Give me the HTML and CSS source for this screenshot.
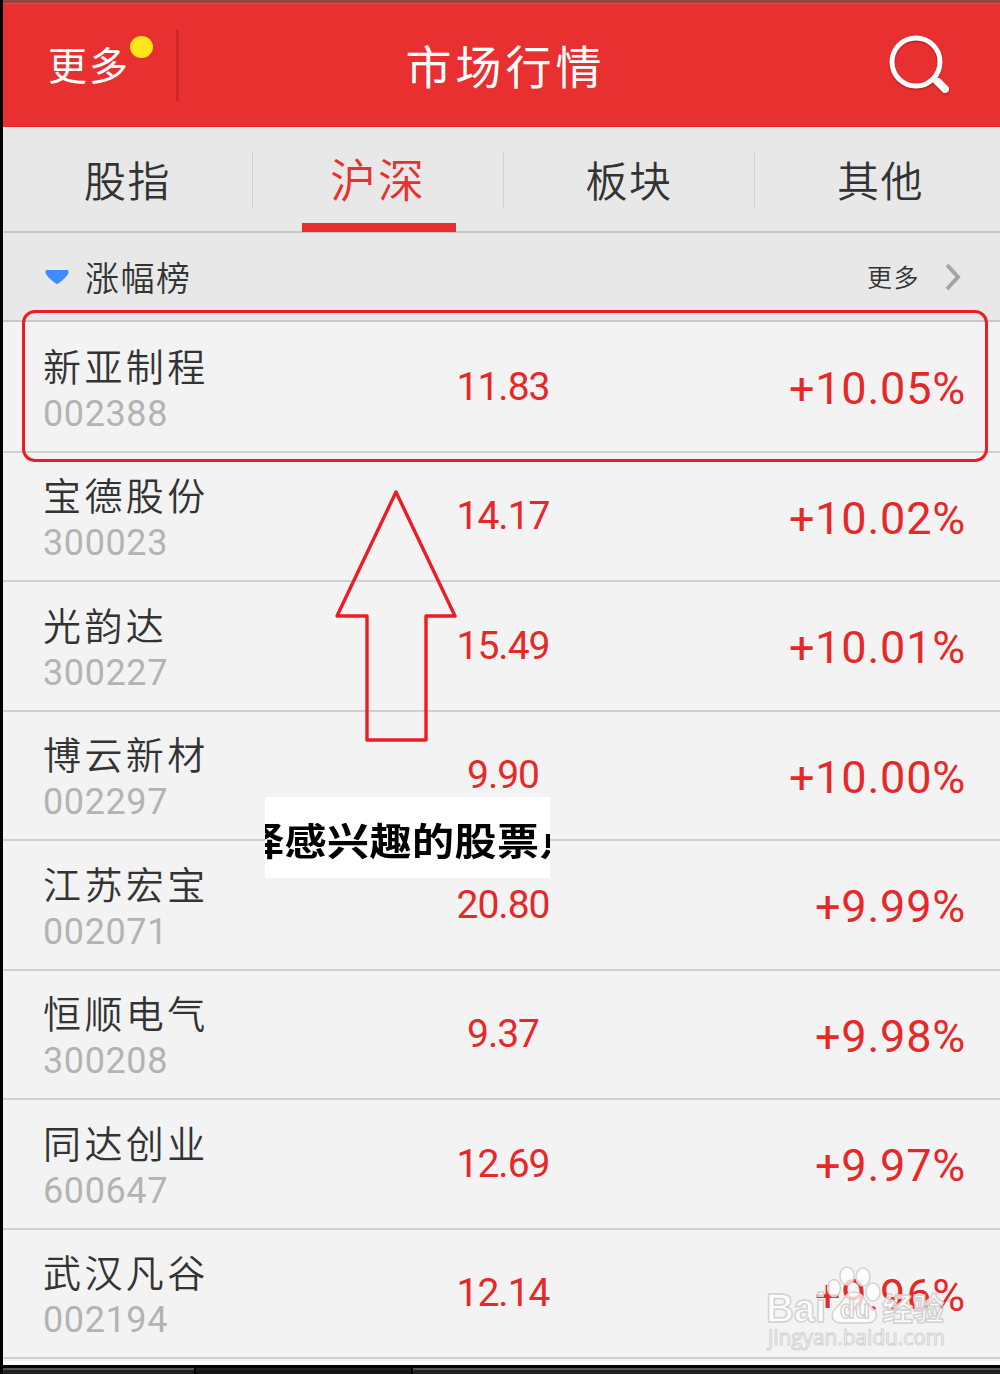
FILE: index.html
```html
<!doctype html>
<html lang="zh-CN">
<head>
	<title>市场行情</title>
	<meta charset="utf-8" />
	<link rel="stylesheet" href="styles.css">
</head>
	<body>
		<div class="screen">
			<header class="header">
				<a class="menu">更多<i class="dot"></i></a>
				<h1>市场行情</h1>
				<svg class="search" width="64" height="62" viewBox="0 0 64 62">
					<circle cx="30" cy="28" r="24" fill="none" stroke="#fff" stroke-width="5"/>
					<path d="M46 43L52 49" stroke="#fff" stroke-width="6"/>
					<path d="M52 48L59 55" stroke="#fff" stroke-width="8" stroke-linecap="round"/>
				</svg>
			</header>
			<nav class="tabs">
				<a class="tab">股指</a>
				<a class="tab active">沪深</a>
				<a class="tab">板块</a>
				<a class="tab">其他</a>
			</nav>
			<div class="section">
				<svg class="caret" width="24" height="16" viewBox="0 0 24 16"><path d="M2 1H22Q24 1 23.5 4Q22 8 14 14Q12 16 10 14Q2 8 .5 4Q0 1 2 1Z" fill="#3f8cff"/></svg>
				<span class="section-name">涨幅榜</span>
				<span class="section-more">更多</span>
				<svg class="chevron" width="18" height="28" viewBox="0 0 18 28"><path d="M3 2L14 14L3 26" fill="none" stroke="#a5a5a5" stroke-width="4"/></svg>
			</div>
			<ul class="stocks">
				<li><div><p class="name">新亚制程</p><p class="code">002388</p></div><span class="price">11.83</span><span class="change">+10.05%</span></li>
				<li><div><p class="name">宝德股份</p><p class="code">300023</p></div><span class="price">14.17</span><span class="change">+10.02%</span></li>
				<li><div><p class="name">光韵达</p><p class="code">300227</p></div><span class="price">15.49</span><span class="change">+10.01%</span></li>
				<li><div><p class="name">博云新材</p><p class="code">002297</p></div><span class="price">9.90</span><span class="change">+10.00%</span></li>
				<li><div><p class="name">江苏宏宝</p><p class="code">002071</p></div><span class="price">20.80</span><span class="change">+9.99%</span></li>
				<li><div><p class="name">恒顺电气</p><p class="code">300208</p></div><span class="price">9.37</span><span class="change">+9.98%</span></li>
				<li><div><p class="name">同达创业</p><p class="code">600647</p></div><span class="price">12.69</span><span class="change">+9.97%</span></li>
				<li><div><p class="name">武汉凡谷</p><p class="code">002194</p></div><span class="price">12.14</span><span class="change">+9.96%</span></li>
			</ul>
			<footer class="bottom"><i></i><i class="current"></i><i></i></footer>
		</div>

		<!-- annotations over the list -->
		<div class="highlight"></div>
		<svg class="arrow" width="124" height="254" viewBox="0 0 124 254">
			<path d="M62 4L121 128H92V252H33V128H3Z" fill="none" stroke="#ed1c24" stroke-width="3.4" stroke-linejoin="round"/>
		</svg>
		<div class="note"><p>择感兴趣的股票点</p></div>
		<svg class="watermark" width="190" height="94" viewBox="0 0 190 94">
			<g fill="#fff" fill-opacity=".75" stroke="#d2d2d2" stroke-width="1.5">
				<text class="brand" x="4" y="62" textLength="60" lengthAdjust="spacingAndGlyphs">Bai</text>
				<ellipse cx="72" cy="28" rx="6.5" ry="8.5"/>
				<ellipse cx="85" cy="16" rx="7" ry="9"/>
				<ellipse cx="101" cy="17" rx="7" ry="9"/>
				<ellipse cx="111" cy="32" rx="7" ry="9"/>
				<path d="M92 32C83 32 82 41 76 46C67 53 69 63 79 63H105C115 63 118 53 109 47C103 42 101 32 92 32Z"/>
				<text class="du" x="78" y="58" textLength="30" lengthAdjust="spacingAndGlyphs">du</text>
				<text class="jingyan" x="120" y="60">经验</text>
				<text class="site" x="6" y="85" textLength="177" lengthAdjust="spacingAndGlyphs">jingyan.baidu.com</text>
			</g>
		</svg>
	</body>
</html>
```

FILE: styles.css
```css
* {
	box-sizing: border-box;
}

body {
	margin: 0;
	width: 1000px;
	height: 1374px;
	position: relative;
	overflow: hidden;
	font-family: Roboto, "Noto Sans CJK SC", sans-serif;
	color: #333;
	background-color: #f3f3f3;
}

h1, p, ul {
	margin: 0;
	padding: 0;
	font-weight: normal;
}

.screen {
	height: 1374px;
	display: flex;
	flex-direction: column;
	border-left: 3px solid #000;
	overflow: hidden;
}

.header {
	flex: none;
	height: 127px;
	display: grid;
	grid-template-columns: 176px 1fr 176px;
	align-items: center;
	color: #fff;
	background-color: #e93030;
	border-top: 3px solid #994040;
	border-bottom: 1px solid #e42328;
	box-shadow: inset 0 1px #f04848;
}

.menu {
	position: relative;
	height: 72px;
	padding-left: 45px;
	border-right: 3px solid #c92929;
	font-size: 39px;
	line-height: 76px;
	letter-spacing: 2px;
}

.dot {
	position: absolute;
	left: 127px;
	top: 7px;
	width: 23px;
	height: 22px;
	border-radius: 50%;
	background-color: #ffe51c;
}

.header h1 {
	text-align: center;
	font-size: 46px;
	line-height: 64px;
	letter-spacing: 4px;
	padding: 6px 0 0 8px;
}

.search {
	justify-self: end;
	margin-right: 50px;
	filter: drop-shadow(0 1px 1px rgba(120, 0, 0, .5));
}

.tabs {
	flex: none;
	width: 1003px;
	height: 106px;
	display: grid;
	grid-template-columns: 250px 251px 251px 251px;
	background-color: #e8e8e8;
	border-bottom: 2px solid #c9c9c9;
}

.tab {
	position: relative;
	height: 58px;
	margin-top: 24px;
	text-align: center;
	font-size: 42px;
	font-weight: 350;
	line-height: 64px;
	letter-spacing: 1.5px;
	border-right: 1px solid #d0d0d0;
}

.tab:last-child {
	border-right: 0;
}

.tab.active {
	color: #e93030;
	font-size: 46px;
	line-height: 61px;
	letter-spacing: 2px;
}

.tab.active::after {
	content: "";
	position: absolute;
	left: 49px;
	top: 72px;
	width: 154px;
	height: 9px;
	background-color: #e82e2e;
}

.section {
	flex: none;
	height: 89px;
	display: flex;
	align-items: center;
	padding: 1px 38px 0 42px;
	background-color: #e8e8e8;
	border-bottom: 2px solid #c8c8c8;
}

.section-name {
	margin-left: 16px;
	padding-top: 3px;
	font-size: 34px;
	font-weight: 350;
	letter-spacing: 1.5px;
	line-height: 50px;
}

.section-more {
	margin-left: auto;
	margin-right: 24px;
	padding-bottom: 3px;
	font-size: 25px;
	font-weight: 350;
	letter-spacing: 1.5px;
}

.stocks {
	flex: none;
	list-style: none;
	padding-top: 1px;
}

.stocks li {
	height: 129.5px;
	display: grid;
	grid-template-columns: 335px 250px 1fr;
	align-items: center;
	padding: 0 34px 0 40px;
	border-bottom: 2px solid #cfcfcf;
}

.name {
	padding-top: 6px;
	font-size: 38px;
	font-weight: 350;
	line-height: 48px;
	letter-spacing: 3.4px;
}

.code {
	font-size: 36px;
	line-height: 44px;
	letter-spacing: .6px;
	color: #b3b3b3;
}

.price {
	text-align: center;
	font-size: 39px;
	letter-spacing: -1px;
	color: #e62828;
}

.change {
	text-align: right;
	font-size: 45px;
	letter-spacing: .8px;
	color: #e62828;
	padding-top: 4px;
}

.bottom {
	flex: 1;
	margin-top: 6px;
	display: grid;
	grid-template-columns: 191px 215px 1fr;
	gap: 2px;
	background-color: #000;
	padding-top: 3px;
	box-shadow: 0 -4px #fff;
}

.bottom i {
	background-color: #202024;
	border-top: 2px solid #555;
}

.bottom .current {
	background-color: #151515;
	border-color: #202020;
}

.highlight {
	position: absolute;
	left: 22px;
	top: 310px;
	width: 966px;
	height: 152px;
	border: 3px solid #ed1c24;
	border-radius: 13px;
}

.arrow {
	position: absolute;
	left: 334px;
	top: 488px;
}

.note {
	position: absolute;
	left: 265px;
	top: 797px;
	width: 285px;
	height: 81px;
	overflow: hidden;
	background-color: #fff;
}

/* wide, low letters that run past both edges of the box */
.note p {
	height: 88px;
	text-indent: -23px;
	white-space: nowrap;
	font-family: "Noto Sans CJK SC", sans-serif;
	font-size: 42px;
	font-weight: bold;
	letter-spacing: .5px;
	line-height: 83px;
	color: #000;
	transform: scaleY(.9);
}

.watermark {
	position: absolute;
	left: 762px;
	top: 1260px;
}

.watermark text {
	font-family: "Liberation Sans", "Noto Sans CJK SC", sans-serif;
	font-weight: bold;
}

.brand {
	font-size: 41px;
}

.du {
	font-size: 25px;
}

.jingyan {
	font-size: 31px;
}

.watermark .site {
	font-family: "Open Sans", sans-serif;
	font-size: 21px;
	font-weight: normal;
	stroke-width: 1;
}
```
